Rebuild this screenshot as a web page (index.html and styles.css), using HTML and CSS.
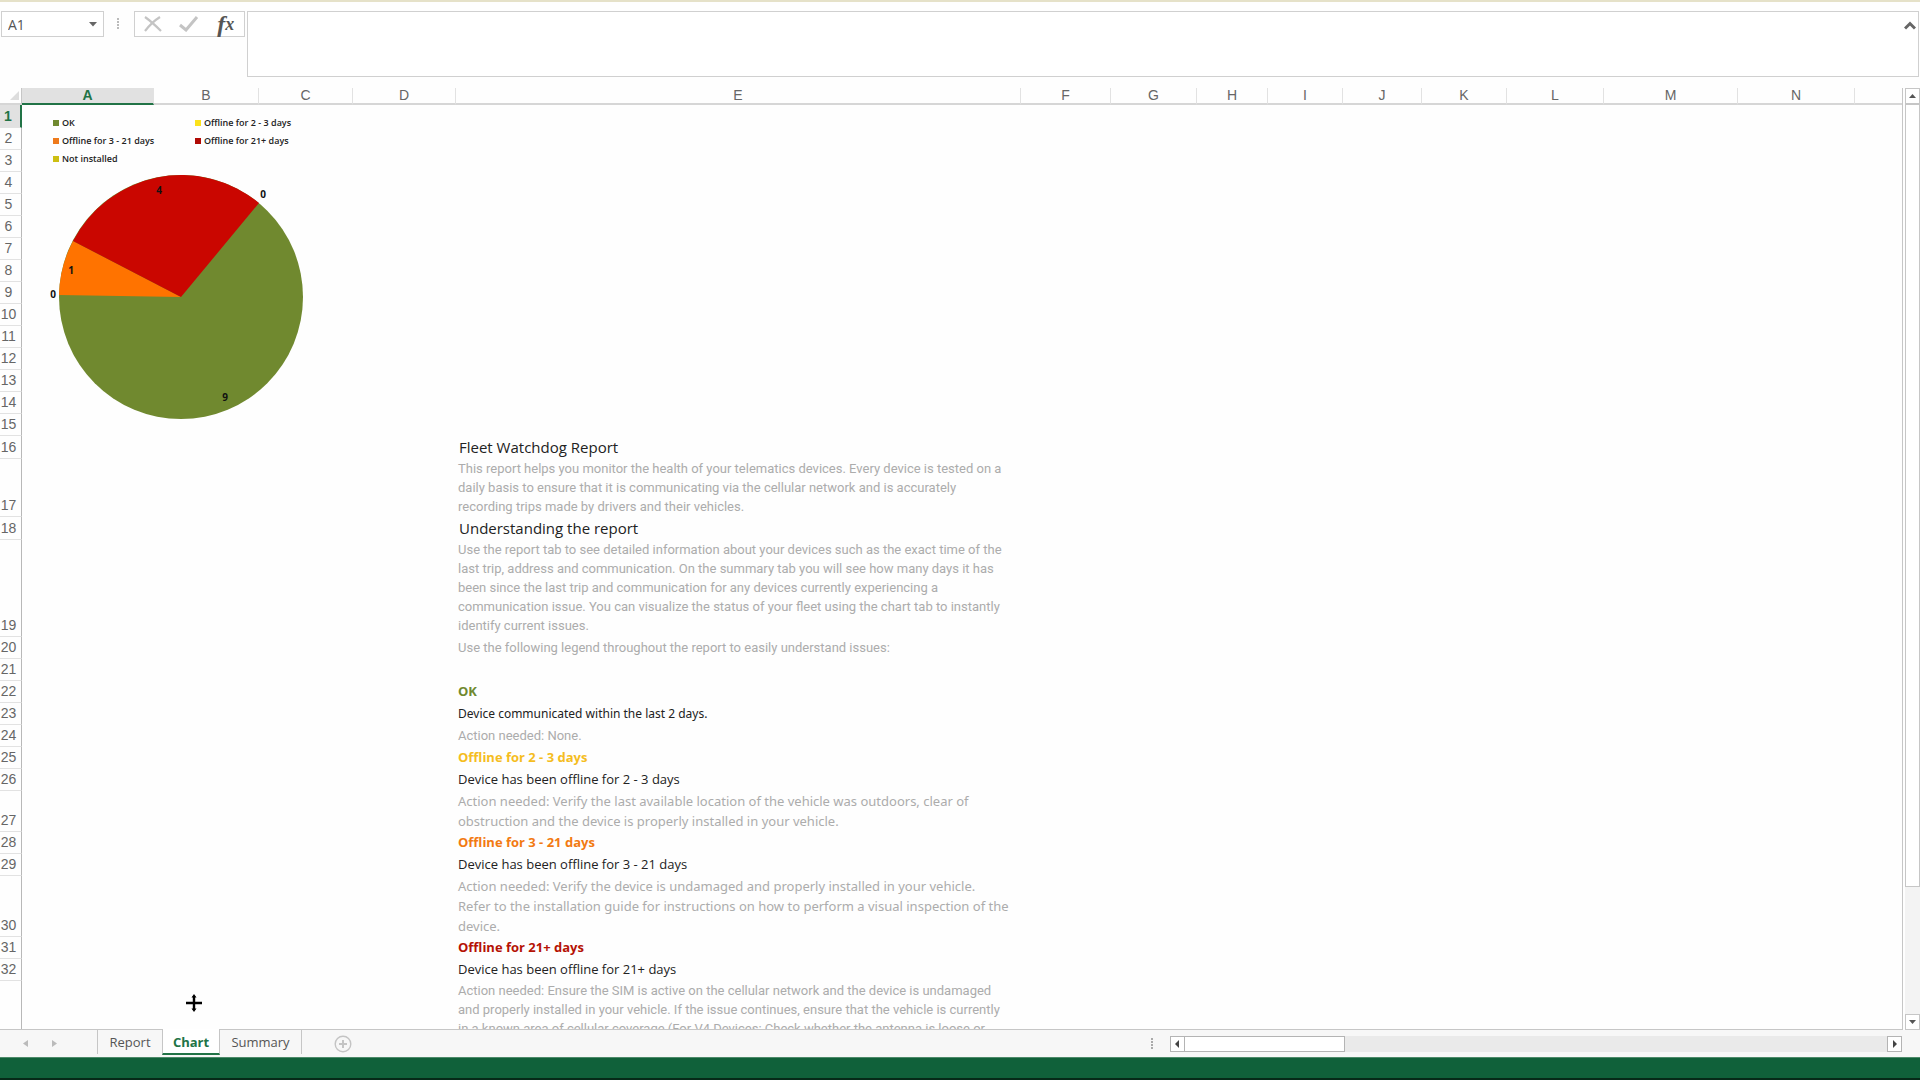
FILE: index.html
```html
<!DOCTYPE html>
<html lang="en">
<head>
    <meta charset="UTF-8">
    <meta name="viewport" content="width=device-width, initial-scale=1.0">
    <title>Fleet Watchdog Report</title>
    <link rel="stylesheet" href="styles.css">
</head>
<body>
    <div class="formula-bar">
        <div class="name-box">
            <input type="text" class="name-input" value="A1" aria-label="Name box">
            <button class="name-arrow" aria-label="Show names">
                <svg width="8" height="5" viewBox="0 0 8 5"><path d="M0 0h8L4 4.5z" fill="#666"/></svg>
            </button>
        </div>
        <svg class="grip" width="3" height="12" viewBox="0 0 3 12"><path d="M0 0h2v2H0zM0 3h2v2H0zM0 6h2v2H0zM0 9h2v2H0z" fill="#bbb"/></svg>
        <div class="formula-tools">
            <button aria-label="Cancel">
                <svg width="18" height="16" viewBox="0 0 18 16"><path d="M1 1Q8 6 17 15M16 1Q8 6 1 15" fill="none" stroke="#c4c4c4" stroke-width="2.2"/></svg>
            </button>
            <button aria-label="Enter">
                <svg width="20" height="16" viewBox="0 0 20 16"><path d="M1 9l6 5L18 1" fill="none" stroke="#c4c4c4" stroke-width="3"/></svg>
            </button>
            <button class="fx" aria-label="Insert function">f<span>x</span></button>
        </div>
        <div class="formula-field">
            <textarea aria-label="Formula"></textarea>
            <button class="collapse" aria-label="Collapse formula bar">
                <svg width="12" height="9" viewBox="0 0 12 9"><path d="M1 7.5L6 2.5l5 5" fill="none" stroke="#666" stroke-width="3"/></svg>
            </button>
        </div>
    </div>

    <div class="workspace">
        <div class="sheet">
            <table class="grid">
                <colgroup>
                    <col class="c-head"><col class="c-a"><col class="c-b"><col class="c-c"><col class="c-d"><col class="c-e"><col class="c-f"><col class="c-g"><col class="c-h"><col class="c-i"><col class="c-j"><col class="c-k"><col class="c-l"><col class="c-m"><col class="c-n"><col>
                </colgroup>
                <thead>
                    <tr>
                        <th class="corner"><svg width="9" height="9" viewBox="0 0 9 9"><path d="M9 0v9H0z" fill="#ddd"/></svg></th>
                        <th class="active">A</th><th>B</th><th>C</th><th>D</th><th>E</th><th>F</th><th>G</th><th>H</th><th>I</th><th>J</th><th>K</th><th>L</th><th>M</th><th>N</th><th class="last"></th>
                    </tr>
                </thead>
                <tbody>
                    <tr class="tall"><th class="active">1</th><td colspan="15"></td></tr>
                    <tr><th>2</th></tr>
                    <tr><th>3</th></tr>
                    <tr><th>4</th></tr>
                    <tr><th>5</th></tr>
                    <tr><th>6</th></tr>
                    <tr><th>7</th></tr>
                    <tr><th>8</th></tr>
                    <tr><th>9</th></tr>
                    <tr><th>10</th></tr>
                    <tr><th>11</th></tr>
                    <tr><th>12</th></tr>
                    <tr><th>13</th></tr>
                    <tr><th>14</th></tr>
                    <tr><th>15</th></tr>
                    <tr class="tall"><th>16</th><td colspan="4"></td><td class="title">Fleet Watchdog Report</td></tr>
                    <tr class="lines-3"><th>17</th><td colspan="4"></td><td class="note">This report helps you monitor the health of your telematics devices. Every device is tested on a<br>daily basis to ensure that it is communicating via the cellular network and is accurately<br>recording trips made by drivers and their vehicles.</td></tr>
                    <tr class="tall"><th>18</th><td colspan="4"></td><td class="title">Understanding the report</td></tr>
                    <tr class="lines-5"><th>19</th><td colspan="4"></td><td class="note">Use the report tab to see detailed information about your devices such as the exact time of the<br>last trip, address and communication. On the summary tab you will see how many days it has<br>been since the last trip and communication for any devices currently experiencing a<br>communication issue. You can visualize the status of your fleet using the chart tab to instantly<br>identify current issues.</td></tr>
                    <tr><th>20</th><td colspan="4"></td><td class="note single">Use the following legend throughout the report to easily understand issues:</td></tr>
                    <tr><th>21</th></tr>
                    <tr><th>22</th><td colspan="4"></td><td class="status ok">OK</td></tr>
                    <tr><th>23</th><td colspan="4"></td><td class="state compact">Device communicated within the last 2 days.</td></tr>
                    <tr><th>24</th><td colspan="4"></td><td class="note single">Action needed: None.</td></tr>
                    <tr><th>25</th><td colspan="4"></td><td class="status warn">Offline for 2 - 3 days</td></tr>
                    <tr><th>26</th><td colspan="4"></td><td class="state">Device has been offline for 2 - 3 days</td></tr>
                    <tr class="action-2"><th>27</th><td colspan="4"></td><td class="note loose">Action needed: Verify the last available location of the vehicle was outdoors, clear of<br>obstruction and the device is properly installed in your vehicle.</td></tr>
                    <tr><th>28</th><td colspan="4"></td><td class="status late">Offline for 3 - 21 days</td></tr>
                    <tr><th>29</th><td colspan="4"></td><td class="state">Device has been offline for 3 - 21 days</td></tr>
                    <tr class="action-3"><th>30</th><td colspan="4"></td><td class="note loose">Action needed: Verify the device is undamaged and properly installed in your vehicle.<br>Refer to the installation guide for instructions on how to perform a visual inspection of the<br>device.</td></tr>
                    <tr><th>31</th><td colspan="4"></td><td class="status lost">Offline for 21+ days</td></tr>
                    <tr><th>32</th><td colspan="4"></td><td class="state">Device has been offline for 21+ days</td></tr>
                    <tr class="lines-5"><th></th><td colspan="4"></td><td class="note">Action needed: Ensure the SIM is active on the cellular network and the device is undamaged<br>and properly installed in your vehicle. If the issue continues, ensure that the vehicle is currently<br>in a known area of cellular coverage (For V4 Devices: Check whether the antenna is loose or</td></tr>
                </tbody>
            </table>

            <!-- chart floats over the cells -->
            <div class="chart">
                <ul class="legend">
                    <li class="key-ok">OK</li>
                    <li class="key-warn">Offline for 2 - 3 days</li>
                    <li class="key-late">Offline for 3 - 21 days</li>
                    <li class="key-lost">Offline for 21+ days</li>
                    <li class="key-none">Not installed</li>
                </ul>
                <svg class="pie" width="270" height="256" viewBox="0 0 270 256">
                    <circle cx="136" cy="129" r="122" fill="#70892f"/>
                    <path d="M136 129L14 127A122 122 0 0 1 28 73z" fill="#ff7300"/>
                    <path d="M136 129L28 73A122 122 0 0 1 214 35z" fill="#ca0600"/>
                    <text x="114" y="26">4</text>
                    <text x="218" y="30">0</text>
                    <text x="26" y="106">1</text>
                    <text x="8" y="130">0</text>
                    <text x="180" y="233">9</text>
                </svg>
            </div>

            <svg class="cursor" width="18" height="18" viewBox="0 0 18 18">
                <path d="M9 2v14M1 9h16" stroke="#000" stroke-width="2.4"/>
                <path d="M6.5 3.5L9 0l2.5 3.5zM6.5 14.5L9 18l2.5-3.5z"/>
            </svg>
        </div>

        <div class="v-scroll">
            <button aria-label="Scroll up"><svg width="7" height="4" viewBox="0 0 7 4"><path d="M0 4h7L3.5 0z" fill="#555"/></svg></button>
            <div class="v-track"><div class="v-thumb"></div></div>
            <button aria-label="Scroll down"><svg width="7" height="4" viewBox="0 0 7 4"><path d="M0 0h7L3.5 4z" fill="#555"/></svg></button>
        </div>
    </div>

    <div class="tab-bar">
        <div class="tab-nav">
            <button aria-label="Previous sheet"><svg width="5" height="7" viewBox="0 0 5 7"><path d="M5 0v7L0 3.5z" fill="#bbb"/></svg></button>
            <button aria-label="Next sheet"><svg width="5" height="7" viewBox="0 0 5 7"><path d="M0 0v7l5-3.5z" fill="#bbb"/></svg></button>
        </div>
        <div class="tabs">
            <button class="tab first">Report</button>
            <button class="tab selected">Chart</button>
            <button class="tab end">Summary</button>
        </div>
        <button class="add-sheet" aria-label="New sheet">
            <svg width="18" height="18" viewBox="0 0 18 18"><circle cx="9" cy="9" r="7.8" fill="none" stroke="#c4c4c4" stroke-width="1.4"/><path d="M9 5v8M5 9h8" stroke="#c4c4c4" stroke-width="2"/></svg>
        </button>
        <svg class="bar-grip" width="3" height="12" viewBox="0 0 3 12"><path d="M0 0h2v2H0zM0 3h2v2H0zM0 6h2v2H0zM0 9h2v2H0z" fill="#aaa"/></svg>
        <div class="h-scroll">
            <button aria-label="Scroll left"><svg width="4" height="8" viewBox="0 0 4 8"><path d="M4 0v8L0 4z" fill="#444"/></svg></button>
            <div class="h-track"><div class="h-thumb"></div></div>
            <button aria-label="Scroll right"><svg width="4" height="8" viewBox="0 0 4 8"><path d="M0 0v8l4-4z" fill="#444"/></svg></button>
        </div>
    </div>
    <div class="status-bar"></div>
</body>
</html>
```
FILE: styles.css
```css
*{
    box-sizing: border-box;
}
body{
    margin:0;
    height:100vh;
    display: flex;
    flex-direction: column;
    overflow: hidden;
    background-color: #fefefe;
    border-top:2px solid #e5e1c8;
    font-family: "Open Sans","Noto Sans",sans-serif;
}
button{
    display: flex;
    align-items: center;
    justify-content: center;
    padding:0;
    border:none;
    background: transparent;
}
svg{
    display: block;
}

/* formula bar */
.formula-bar{
    display: flex;
    align-items: flex-start;
    height:86px;
    padding:9px 1px 10px 1px;
}
.name-box{
    display: flex;
    width:103px;
    height:26px;
    border:1px solid #d0d0d0;
    background-color: white;
}
.name-input{
    flex:1;
    min-width:0;
    padding:0 6px;
    border:none;
    outline: none;
    background: transparent;
    color:#555;
    font-family: "Open Sans",sans-serif;
    font-size: 14px;
}
.name-arrow{
    width:20px;
}
.grip{
    margin:7px 14px 0 13px;
}
.formula-tools{
    display: flex;
    width:111px;
    height:26px;
    border:1px solid #d0d0d0;
    background-color: white;
}
.formula-tools button{
    flex:1;
}
.fx{
    color:#555;
    font-family: "Liberation Serif",serif;
    font-size: 24px;
    font-style: italic;
    font-weight: bold;
    line-height: 24px;
}
.fx span{
    font-size: 18px;
}
.formula-field{
    display: flex;
    align-items: flex-start;
    flex:1;
    height:66px;
    margin-left:2px;
    border:1px solid #d0d0d0;
    background-color: white;
}
.formula-field textarea{
    flex:1;
    height:100%;
    border:none;
    outline: none;
    resize: none;
    background: transparent;
}
.collapse{
    width:16px;
    height:26px;
}

/* sheet */
.workspace{
    flex:1;
    min-height:0;
    display: flex;
    gap:2px;
}
.sheet{
    position: relative;
    flex:1;
    min-width:0;
    overflow: hidden;
    border-right:1px solid #c6c6c6;
    border-bottom:1px solid #c6c6c6;
}
.grid{
    width:100%;
    table-layout: fixed;
    border-collapse: separate;
    border-spacing: 0;
}
.c-head{ width:22px; }
.c-a{ width:132px; }
.c-b{ width:105px; }
.c-c{ width:94px; }
.c-d{ width:103px; }
.c-e{ width:565px; }
.c-f{ width:90px; }
.c-g{ width:86px; }
.c-h{ width:71px; }
.c-i{ width:75px; }
.c-j{ width:79px; }
.c-k{ width:85px; }
.c-l{ width:97px; }
.c-m{ width:134px; }
.c-n{ width:117px; }
.grid th, .grid td{
    padding:0;
    white-space: nowrap;
    vertical-align: top;
}
.grid th{
    color:#666;
    font-family: "Liberation Sans",Arial,sans-serif;
    font-size: 14px;
    font-weight: normal;
}
.grid thead th{
    height:17px;
    line-height: 15px;
    border-right:1px solid #e2e2e2;
    border-bottom:2px solid #d6d6d6;
}
.grid thead .active{
    background-color: #e1e1e1;
    border-bottom-color: #217346;
    color:#217346;
    font-weight: bold;
}
.grid thead .corner{
    padding:3px 0 0 10px;
    border-right-color: #c6c6c6;
}
.grid thead .last{
    border-right:none;
}
.grid tbody th{
    height:22px;
    padding-right:4px;
    line-height: 21px;
    vertical-align: bottom;
    text-align: center;
    border-right:1px solid #b8b8b8;
    border-bottom:1px solid #e2e2e2;
}
.grid tbody .active{
    background-color: #e1e1e1;
    border-right:2px solid #217346;
    color:#217346;
    font-weight: bold;
}
.grid .tall th{ height:23px; }
.grid .lines-3 th{ height:58px; }
.grid .lines-5 th{ height:97px; }
.grid .action-2 th{ height:41px; }
.grid .action-3 th{ height:61px; }

.grid .title, .grid .note, .grid .state, .grid .status{
    padding-left:2px;
    font-size: 13px;
    line-height: 21px;
}
.grid .title{
    padding-left:3px;
    font-size: 15px;
    line-height: 22px;
    color:#222;
}
.grid .note{
    color:#acacac;
    font-family: Roboto,"Noto Sans",sans-serif;
    line-height: 19px;
}
.grid .loose{
    font-family: "Noto Sans",sans-serif;
    line-height: 20px;
}
.grid .single{
    line-height: 21px;
}
.grid .state{
    color:#222;
}
.grid .compact{
    font-family: "Noto Sans",sans-serif;
    font-size: 12px;
}
.grid .status{
    font-weight: bold;
}
.grid .ok{ color:#70892f; }
.grid .warn{ color:#f5bd1f; }
.grid .late{ color:#f27a12; }
.grid .lost{ color:#b51205; }

/* chart */
.chart{
    position: absolute;
    left:45px;
    top:26px;
    width:270px;
}
.legend{
    display: grid;
    grid-template-columns: 142px 1fr;
    margin:0;
    padding:0 0 0 8px;
    list-style: none;
    color:#222;
    font-size: 9px;
    font-weight: 600;
    line-height: 18px;
}
.legend li{
    display: flex;
    align-items: center;
    gap:3px;
}
.legend li::before{
    content:"";
    width:6px;
    height:6px;
    background-color: #70892f;
}
.legend .key-warn::before{ background-color: #fbe21b; }
.legend .key-late::before{ background-color: #ee7a1c; }
.legend .key-lost::before{ background-color: #b00a05; }
.legend .key-none::before{ background-color: #cdbf12; }
.pie text{
    font-size: 10px;
    font-weight: bold;
    text-anchor: middle;
    fill:#111;
}
.cursor{
    position: absolute;
    left:185px;
    top:906px;
}

/* scroll bars */
.v-scroll{
    display: flex;
    flex-direction: column;
    width:15px;
    background-color: #f3f3f3;
}
.v-scroll button{
    height:16px;
    border:1px solid #c6c6c6;
    background-color: white;
}
.v-track{
    flex:1;
}
.v-thumb{
    height:86%;
    border:1px solid #c6c6c6;
    background-color: white;
}
.h-scroll{
    display: flex;
    width:38.5%;
    height:16px;
    background-color: #eaeaea;
}
.h-scroll button{
    width:15px;
    border:1px solid #b4b4b4;
    background-color: white;
}
.h-track{
    flex:1;
}
.h-thumb{
    width:160px;
    height:16px;
    border:1px solid #b4b4b4;
    border-left:none;
    background-color: white;
}

/* sheet tabs */
.tab-bar{
    display: flex;
    height:27px;
    padding-right:18px;
    align-items: center;
    background-color: #f7f7f7;
}
.tab-nav{
    display: flex;
    gap:24px;
    width:97px;
    padding-left:23px;
}
.tabs{
    display: flex;
    align-self: flex-start;
}
.tab{
    width:65px;
    height:24px;
    color:#555;
    font-family: "Open Sans",sans-serif;
    font-size: 13px;
}
.first{
    border-left:1px solid #c6c6c6;
}
.selected{
    width:58px;
    margin-top:-1px;
    height:26px;
    padding-top:2px;
    border:1px solid #c6c6c6;
    border-top:none;
    border-bottom:2px solid #217346;
    background-color: white;
    color:#217346;
    font-weight: bold;
    position: relative;
}
.end{
    width:82px;
    border-right:1px solid #c6c6c6;
}
.add-sheet{
    margin-left:32px;
}
.bar-grip{
    margin:0 16px 0 auto;
}
.status-bar{
    height:23px;
    background-color: #10613a;
    border-top:1px solid #4d8a69;
    border-bottom:2px solid #062a18;
}
```
